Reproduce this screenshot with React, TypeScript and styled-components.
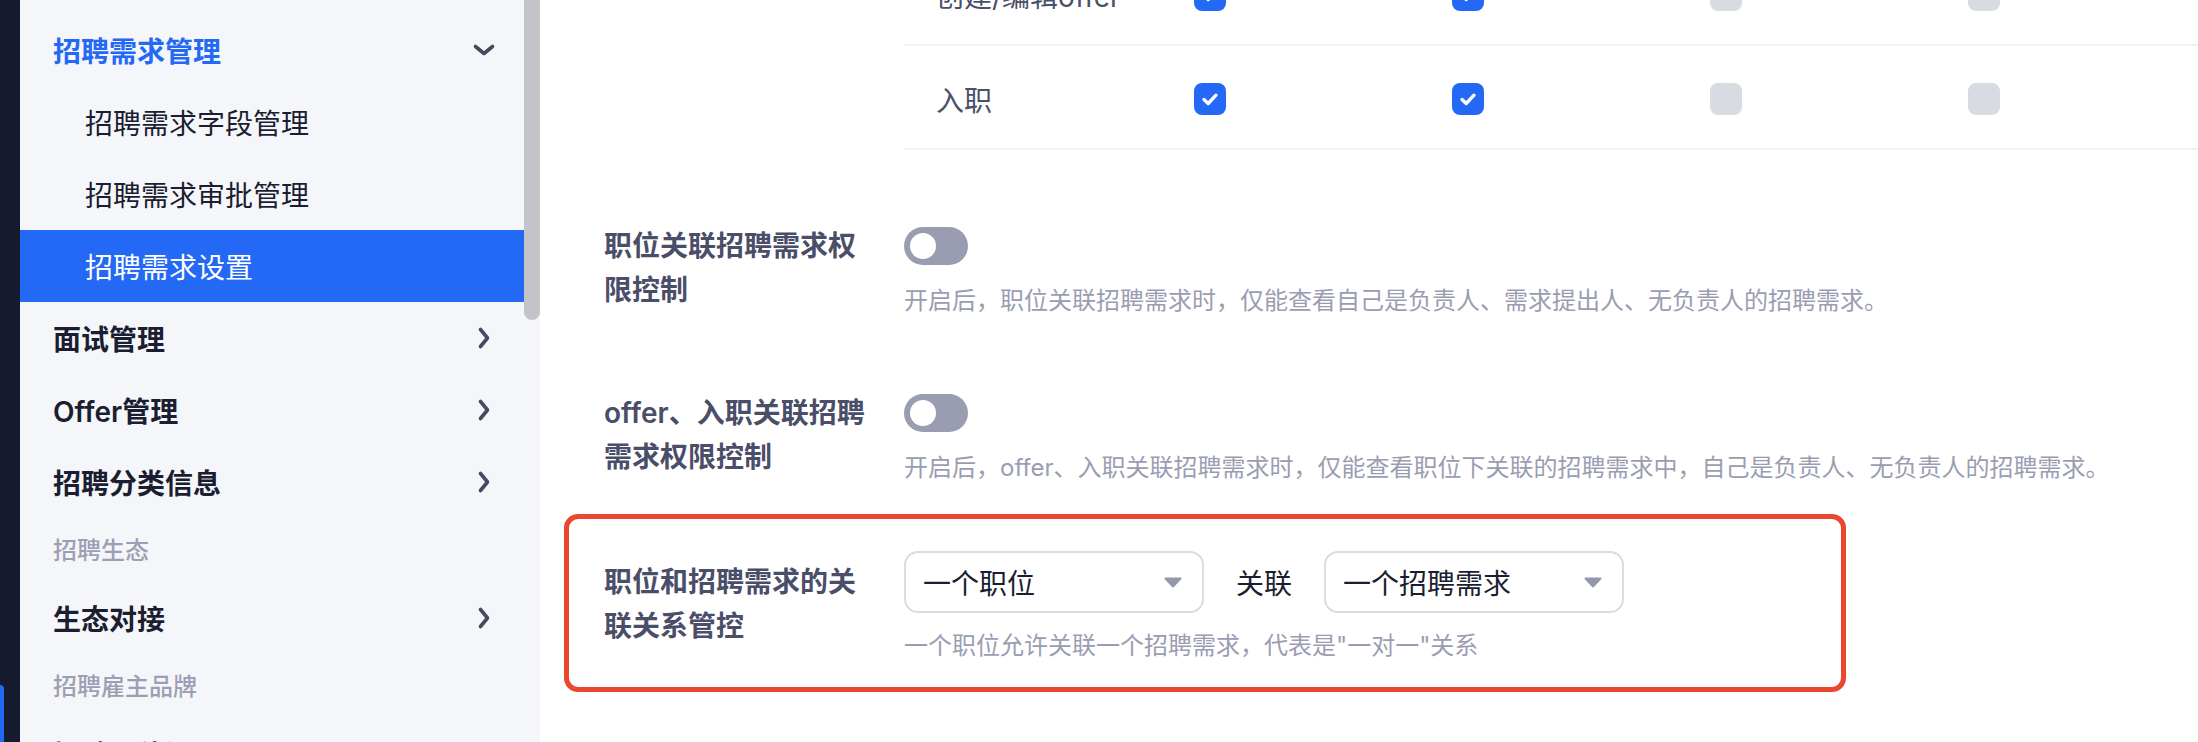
import React from 'react';
import styled, { createGlobalStyle } from 'styled-components';

const GlobalStyle = createGlobalStyle`
  html, body {
    margin: 0;
    padding: 0;
    background: #fff;
  }
  body {
    font-family: Inter, "Noto Sans CJK SC", sans-serif;
  }
  * {
    box-sizing: border-box;
  }
`;

const Page = styled.div`
  display: flex;
  width: 2198px;
  height: 742px;
  overflow: hidden;
`;

/* dark app rail on the far left */
const Rail = styled.div`
  flex: none;
  width: 20px;
  display: flex;
  flex-direction: column;
  background: #161a2f;
`;

const RailTab = styled.div`
  margin-top: auto;
  width: 4px;
  height: 57px;
  border-radius: 0 4px 0 0;
  background: #2469f5;
`;

const Sidebar = styled.aside`
  flex: none;
  display: flex;
  width: 520px;
  background: #f5f6fa;
`;

const Menu = styled.nav`
  width: 504px;
  padding-top: 14px;
`;

const ScrollTrack = styled.div`
  width: 16px;
`;

const ScrollThumb = styled.div`
  height: 320px;
  border-radius: 0 0 8px 8px;
  background: #c3c4c9;
`;

const MenuItem = styled.div<{ $sub?: boolean; $active?: boolean; $open?: boolean }>`
  display: flex;
  align-items: center;
  justify-content: space-between;
  height: 72px;
  padding: 0 28px 0 ${(p) => (p.$sub ? 65 : 33)}px;
  font-size: 28px;
  font-weight: ${(p) => (p.$sub ? 400 : 600)};
  color: ${(p) => (p.$active ? '#fff' : p.$open ? '#2469f5' : '#1b1e30')};
  background: ${(p) => (p.$active ? '#2469f5' : 'transparent')};
  white-space: nowrap;
`;

const MenuGroup = styled.div`
  height: 64px;
  padding: 20px 0 0 33px;
  font-size: 24px;
  line-height: 26px;
  font-weight: 500;
  color: #9c9fb3;
`;

const Chevron: React.FC<{ dir: 'down' | 'right' }> = ({ dir }) => (
  <svg width="24" height="24" viewBox="0 0 24 24" fill="none">
    <path
      d={dir === 'down' ? 'M3.5 8.5 L12 15.5 L20.5 8.5' : 'M8.5 3.5 L15.5 12 L8.5 20.5'}
      stroke="#454a62"
      strokeWidth="3.6"
      strokeLinecap="round"
      strokeLinejoin="round"
    />
  </svg>
);

const Content = styled.main`
  flex: 1;
  min-width: 0;
  padding-left: 64px;
  background: #fff;
  overflow: hidden;
`;

/* permission table, scrolled so its first row is cut at the top */
const PermTable = styled.div`
  margin: -58px 0 0 300px;
`;

const PermRow = styled.div`
  display: grid;
  grid-template-columns: repeat(5, 258px);
  align-items: center;
  height: 104px;
  padding-top: 3px;
  border-bottom: 2px solid #f1f1f7;
`;

const PermName = styled.div`
  padding-left: 32px;
  font-size: 28px;
  color: #4b4f69;
  white-space: nowrap;
`;

const PermCell = styled.div`
  padding-left: 32px;
`;

const Checkbox = styled.div<{ $checked?: boolean }>`
  display: flex;
  align-items: center;
  justify-content: center;
  width: 32px;
  height: 32px;
  border-radius: 8px;
  background: ${(p) => (p.$checked ? '#2469f5' : '#d8dbe2')};
`;

const Check: React.FC = () => (
  <svg width="32" height="32" viewBox="0 0 32 32" fill="none">
    <path
      d="M10 16.5 L14.2 20.5 L22 12.2"
      stroke="#fff"
      strokeWidth="3.4"
      strokeLinecap="round"
      strokeLinejoin="round"
    />
  </svg>
);

const SettingRow = styled.div<{ $gap?: number }>`
  display: flex;
  align-items: flex-start;
  margin-top: ${(p) => p.$gap ?? 0}px;
`;

const SettingLabel = styled.div<{ $offset?: number }>`
  flex: none;
  width: 268px;
  margin-right: 32px;
  padding-top: ${(p) => p.$offset ?? 0}px;
  font-size: 28px;
  line-height: 44px;
  font-weight: 600;
  color: #4a4e69;
`;

const SettingBody = styled.div`
  display: flex;
  flex-direction: column;
`;

const ControlLine = styled.div`
  display: flex;
  align-items: center;
  gap: 32px;
  min-height: 44px;
  font-size: 28px;
  color: #1b1e30;
`;

const Hint = styled.div`
  margin-top: 15px;
  font-size: 24px;
  line-height: 36px;
  color: #9a9db2;
  white-space: nowrap;
`;

const Switch = styled.div<{ $on?: boolean }>`
  display: flex;
  align-items: center;
  justify-content: ${(p) => (p.$on ? 'flex-end' : 'flex-start')};
  width: 64px;
  height: 38px;
  padding: 0 6px;
  border-radius: 19px;
  background: ${(p) => (p.$on ? '#2469f5' : '#9a9cb1')};
`;

const Knob = styled.span`
  width: 26px;
  height: 26px;
  border-radius: 50%;
  background: #fff;
`;

/* red annotation frame drawn around the last setting */
const Annotated = styled.div`
  width: 1282px;
  margin: 28px 0 0 -40px;
  padding: 32px 0 23px 35px;
  border: 5px solid #ea4630;
  border-radius: 14px;
`;

const Select = styled.div`
  display: flex;
  align-items: center;
  justify-content: space-between;
  width: 300px;
  height: 62px;
  padding: 0 20px 0 17px;
  border: 2px solid #d9dce4;
  border-radius: 14px;
  background: #fff;
  font-size: 28px;
  color: #1b1e30;
`;

const Caret: React.FC = () => (
  <svg width="18" height="11" viewBox="0 0 18 11" fill="none">
    <path d="M1.5 1.5 H16.5 L9 9.5 Z" fill="#9598ad" stroke="#9598ad" strokeWidth="2" strokeLinejoin="round" />
  </svg>
);

const perms = [
  { name: '创建/编辑offer', values: [true, true, false, false] },
  { name: '入职', values: [true, true, false, false] },
];

const App: React.FC = () => {
  return (
    <>
      <GlobalStyle />
      <Page>
        <Rail>
          <RailTab />
        </Rail>
        <Sidebar>
          <Menu>
            <MenuItem $open>
              招聘需求管理
              <Chevron dir="down" />
            </MenuItem>
            <MenuItem $sub>招聘需求字段管理</MenuItem>
            <MenuItem $sub>招聘需求审批管理</MenuItem>
            <MenuItem $sub $active>招聘需求设置</MenuItem>
            <MenuItem>
              面试管理
              <Chevron dir="right" />
            </MenuItem>
            <MenuItem>
              Offer管理
              <Chevron dir="right" />
            </MenuItem>
            <MenuItem>
              招聘分类信息
              <Chevron dir="right" />
            </MenuItem>
            <MenuGroup>招聘生态</MenuGroup>
            <MenuItem>
              生态对接
              <Chevron dir="right" />
            </MenuItem>
            <MenuGroup>招聘雇主品牌</MenuGroup>
            <MenuItem>招聘职位设置</MenuItem>
          </Menu>
          <ScrollTrack>
            <ScrollThumb />
          </ScrollTrack>
        </Sidebar>
        <Content>
          <PermTable>
            {perms.map((row) => (
              <PermRow key={row.name}>
                <PermName>{row.name}</PermName>
                {row.values.map((v, i) => (
                  <PermCell key={i}>
                    <Checkbox $checked={v}>{v && <Check />}</Checkbox>
                  </PermCell>
                ))}
              </PermRow>
            ))}
          </PermTable>

          <SettingRow $gap={74}>
            <SettingLabel>职位关联招聘需求权限控制</SettingLabel>
            <SettingBody>
              <ControlLine>
                <Switch>
                  <Knob />
                </Switch>
              </ControlLine>
              <Hint>开启后，职位关联招聘需求时，仅能查看自己是负责人、需求提出人、无负责人的招聘需求。</Hint>
            </SettingBody>
          </SettingRow>

          <SettingRow $gap={72}>
            <SettingLabel>offer、入职关联招聘需求权限控制</SettingLabel>
            <SettingBody>
              <ControlLine>
                <Switch>
                  <Knob />
                </Switch>
              </ControlLine>
              <Hint>开启后，offer、入职关联招聘需求时，仅能查看职位下关联的招聘需求中，自己是负责人、无负责人的招聘需求。</Hint>
            </SettingBody>
          </SettingRow>

          <Annotated>
            <SettingRow>
              <SettingLabel $offset={9}>职位和招聘需求的关联关系管控</SettingLabel>
              <SettingBody>
                <ControlLine>
                  <Select>
                    一个职位
                    <Caret />
                  </Select>
                  关联
                  <Select>
                    一个招聘需求
                    <Caret />
                  </Select>
                </ControlLine>
                <Hint>一个职位允许关联一个招聘需求，代表是"一对一"关系</Hint>
              </SettingBody>
            </SettingRow>
          </Annotated>
        </Content>
      </Page>
    </>
  );
};

export default App;
